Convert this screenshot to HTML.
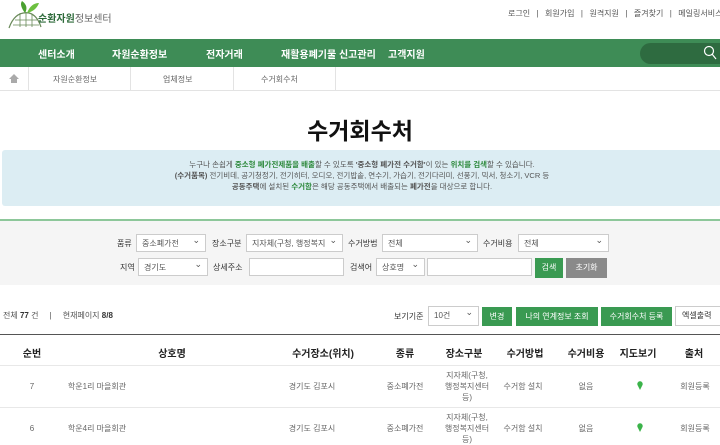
<!DOCTYPE html><html><head><meta charset="utf-8"><style>
*{margin:0;padding:0;box-sizing:border-box}
body{width:720px;height:441px;overflow:hidden;background:#fff;font-family:"Liberation Sans","Noto Sans CJK KR",sans-serif;color:#333;position:relative;font-size:9px}
.a{position:absolute;white-space:nowrap}
.nav{position:absolute;left:0;top:39px;width:720px;height:28px;background:#3e8c56}
.nav span{position:absolute;top:7px;color:#fff;font-size:10px;font-weight:bold;white-space:nowrap}
.sel{position:absolute;height:18px;border:1px solid #ccc;background:#fff;font-size:8px;color:#555;padding:3px 5px;white-space:nowrap}
.sel:after{content:"⌄";position:absolute;right:5px;top:0px;font-size:9px}
.inp{position:absolute;height:18px;border:1px solid #ccc;background:#fff}
.lab{position:absolute;font-size:8px;color:#333;white-space:nowrap}
.btn{position:absolute;height:19px;background:#3a9a52;color:#fff;font-size:8px;text-align:center;line-height:19px;white-space:nowrap}
.th{position:absolute;top:345px;font-size:10px;font-weight:bold;color:#222;transform:translateX(-50%);white-space:nowrap}
.td{position:absolute;font-size:8px;color:#666;transform:translateX(-50%);text-align:center;line-height:11px;white-space:nowrap}
</style></head><body>
<svg class="a" style="left:5px;top:1px" width="40" height="30" viewBox="0 0 40 30"><path d="M4 27 Q10 10 24 12 Q32 14 36 26" fill="none" stroke="#6a8a5a" stroke-width="1.2"/><path d="M8 24h26M10 19h22M15 12v14M21 11v15M27 13v13" stroke="#6a8a5a" stroke-width="0.8"/><path d="M20 12 Q14 4 17 0 Q24 5 20 12Z" fill="#4aa030"/><path d="M22 12 Q26 2 34 2 Q31 10 22 12Z" fill="#6cc040"/></svg>
<div class="a" style="left:38px;top:10px;font-size:10px;font-weight:bold;color:#2d6a3a">순환자원<span style="font-weight:normal;color:#666">정보센터</span></div>
<div class="a" style="left:508px;top:8px;font-size:8px;color:#555;word-spacing:1px">로그인 &nbsp;|&nbsp; 회원가입 &nbsp;|&nbsp; 원격지원 &nbsp;|&nbsp; 즐겨찾기 &nbsp;|&nbsp; 메일링서비스</div>
<div class="nav"><span style="left:38px">센터소개</span><span style="left:112px">자원순환정보</span><span style="left:206px">전자거래</span><span style="left:281px">재활용폐기물 신고관리</span><span style="left:388px">고객지원</span>
<div class="a" style="left:640px;top:4px;width:90px;height:21px;border-radius:11px;background:#2e6b40"></div>
<svg class="a" style="left:703px;top:6px" width="14" height="16"><circle cx="6" cy="6" r="4.5" fill="none" stroke="#fff" stroke-width="1.2"/><path d="M9 9l4 5" stroke="#fff" stroke-width="1.2"/></svg></div>
<div class="a" style="left:0;top:67px;width:720px;height:24px;border-bottom:1px solid #e3e3e3"></div>
<svg class="a" style="left:9px;top:74px" width="10" height="9"><path d="M5 0L0 5h2v4h6V5h2z" fill="#aaa"/></svg>
<div class="a" style="left:28px;top:67px;width:1px;height:24px;background:#e3e3e3"></div>
<div class="a" style="left:130px;top:67px;width:1px;height:24px;background:#e3e3e3"></div>
<div class="a" style="left:233px;top:67px;width:1px;height:24px;background:#e3e3e3"></div>
<div class="a" style="left:335px;top:67px;width:1px;height:24px;background:#e3e3e3"></div>
<div class="a" style="left:53px;top:74px;font-size:8px;color:#666">자원순환정보</div>
<div class="a" style="left:163px;top:74px;font-size:8px;color:#666">업체정보</div>
<div class="a" style="left:261px;top:74px;font-size:8px;color:#666">수거회수처</div>
<div class="a" style="left:0;top:112px;width:720px;text-align:center;font-size:23px;font-weight:bold;color:#111">수거회수처</div>
<div class="a" style="left:2px;top:150px;width:720px;height:56px;background:#dcedf3;border-radius:3px;text-align:center;font-size:7.5px;line-height:11px;padding-top:9px;color:#555">누구나 손쉽게 <b style="color:#2f8a3e">중소형 폐가전제품을 배출</b>할 수 있도록 <b>'중소형 폐가전 수거함'</b>이 있는 <b style="color:#2f8a3e">위치를 검색</b>할 수 있습니다.<br><b>(수거품목)</b> 전기비데, 공기청정기, 전기히터, 오디오, 전기밥솥, 연수기, 가습기, 전기다리미, 선풍기, 믹서, 청소기, VCR 등<br><b>공동주택</b>에 설치된 <b style="color:#2f8a3e">수거함</b>은 해당 공동주택에서 배출되는 <b>폐가전</b>을 대상으로 합니다.</div>
<div class="a" style="left:0;top:219px;width:720px;height:66px;background:#f5f5f5;border-top:2px solid #8dc79a"></div>
<div class="lab" style="left:117px;top:238px">품류</div><div class="sel" style="left:136px;top:234px;width:70px">중소폐가전</div>
<div class="lab" style="left:212px;top:238px">장소구분</div><div class="sel" style="left:246px;top:234px;width:97px">지자체(구청, 행정복지</div>
<div class="lab" style="left:348px;top:238px">수거방법</div><div class="sel" style="left:382px;top:234px;width:96px">전체</div>
<div class="lab" style="left:483px;top:238px">수거비용</div><div class="sel" style="left:518px;top:234px;width:91px">전체</div>
<div class="lab" style="left:120px;top:262px">지역</div><div class="sel" style="left:138px;top:258px;width:70px">경기도</div>
<div class="lab" style="left:213px;top:262px">상세주소</div><div class="inp" style="left:249px;top:258px;width:95px"></div>
<div class="lab" style="left:350px;top:262px">검색어</div><div class="sel" style="left:376px;top:258px;width:49px">상호명</div>
<div class="inp" style="left:427px;top:258px;width:105px"></div>
<div class="btn" style="left:535px;top:258px;width:28px;height:20px">검색</div>
<div class="btn" style="left:566px;top:258px;width:41px;height:20px;background:#8a8a8a">초기화</div>
<div class="a" style="left:3px;top:310px;font-size:8px;color:#555">전체 <b style="color:#333">77</b> 건 &nbsp; &nbsp; | &nbsp; &nbsp; 현재페이지 <b style="color:#333">8/8</b></div>
<div class="lab" style="left:394px;top:311px">보기기준</div><div class="sel" style="left:428px;top:306px;width:51px;height:20px">10건</div>
<div class="btn" style="left:482px;top:307px;width:30px">변경</div>
<div class="btn" style="left:516px;top:307px;width:82px">나의 연계정보 조회</div>
<div class="btn" style="left:601px;top:307px;width:71px">수거회수처 등록</div>
<div class="a" style="left:675px;top:306px;width:50px;height:20px;border:1px solid #ccc;font-size:8px;line-height:18px;padding-left:6px">엑셀출력</div>
<div class="a" style="left:0;top:334px;width:720px;height:1px;background:#555"></div>
<div class="th" style="left:32px">순번</div><div class="th" style="left:172px">상호명</div><div class="th" style="left:323px">수거장소(위치)</div><div class="th" style="left:405px">종류</div><div class="th" style="left:464px">장소구분</div><div class="th" style="left:525px">수거방법</div><div class="th" style="left:586px">수거비용</div><div class="th" style="left:638px">지도보기</div><div class="th" style="left:694px">출처</div>
<div class="a" style="left:0;top:365px;width:720px;height:1px;background:#e8e8e8"></div>
<div class="a" style="left:0;top:407px;width:720px;height:1px;background:#e8e8e8"></div>
<div class="td" style="left:32px;top:381px">7</div><div class="td" style="left:97px;top:381px">학운1리 마을회관</div><div class="td" style="left:312px;top:381px">경기도 김포시</div><div class="td" style="left:405px;top:381px">중소폐가전</div><div class="td" style="left:467px;top:370px">지자체(구청,<br>행정복지센터<br>등)</div><div class="td" style="left:523px;top:381px">수거함 설치</div><div class="td" style="left:586px;top:381px">없음</div>
<svg class="a" style="left:637px;top:381px" width="6" height="9"><path d="M3 9L0.5 4A2.7 2.7 0 1 1 5.5 4Z" fill="#3bb34a"/></svg><div class="td" style="left:695px;top:381px">회원등록</div>
<div class="td" style="left:32px;top:423px">6</div><div class="td" style="left:97px;top:423px">학운4리 마을회관</div><div class="td" style="left:312px;top:423px">경기도 김포시</div><div class="td" style="left:405px;top:423px">중소폐가전</div><div class="td" style="left:467px;top:412px">지자체(구청,<br>행정복지센터<br>등)</div><div class="td" style="left:523px;top:423px">수거함 설치</div><div class="td" style="left:586px;top:423px">없음</div>
<svg class="a" style="left:637px;top:423px" width="6" height="9"><path d="M3 9L0.5 4A2.7 2.7 0 1 1 5.5 4Z" fill="#3bb34a"/></svg><div class="td" style="left:695px;top:423px">회원등록</div>
</body></html>
